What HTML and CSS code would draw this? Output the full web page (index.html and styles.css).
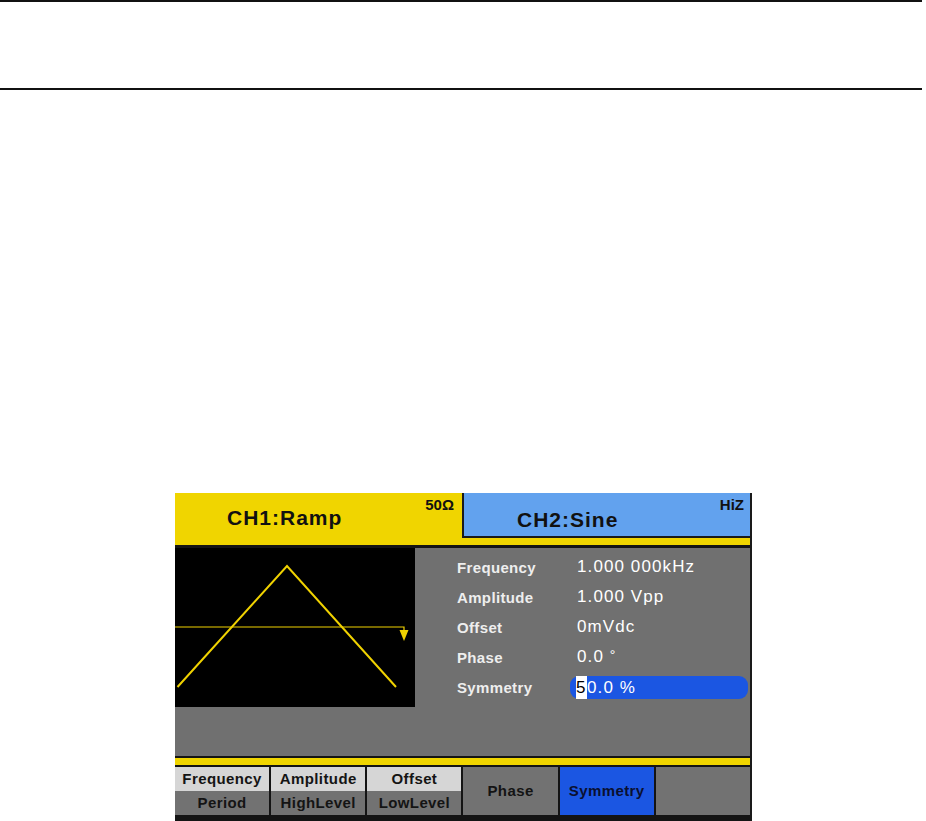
FILE: index.html
```html
<!DOCTYPE html>
<html>
<head>
<meta charset="utf-8">
<link rel="stylesheet" href="styles.css">
</head>
<body>
<div class="rule"></div>
<div class="band"></div>
<div class="rule"></div>
<div class="screen">
  <div class="header">
    <div class="tab tab1">
      <span class="ch">CH1:Ramp</span>
      <span class="load">50Ω</span>
    </div>
    <div class="tab2wrap">
      <div class="tab tab2">
        <span class="ch">CH2:Sine</span>
        <span class="load">HiZ</span>
      </div>
    </div>
  </div>
  <div class="main">
    <div class="graph">
      <svg width="240" height="159" viewBox="0 0 240 159">
        <polyline points="2.5,139 112,18 221,139" fill="none" stroke="#f0d200" stroke-width="2"/>
        <polyline points="0,79 229,79 229,83" fill="none" stroke="#f0d200" stroke-width="1.2"/>
        <polygon points="224.5,82 233.5,82 229,93" fill="#f0d200"/>
      </svg>
    </div>
    <div class="params">
      <div class="row"><span class="lbl">Frequency</span><span class="val">1.000 000kHz</span></div>
      <div class="row"><span class="lbl">Amplitude</span><span class="val">1.000 Vpp</span></div>
      <div class="row"><span class="lbl">Offset</span><span class="val">0mVdc</span></div>
      <div class="row"><span class="lbl">Phase</span><span class="val">0.0 <span class="deg">°</span></span></div>
      <div class="row"><span class="lbl">Symmetry</span><span class="val hl"><span class="cur">5</span>0.0 %</span></div>
    </div>
  </div>
  <div class="footer">
    <div class="ystrip"></div>
    <div class="buttons">
      <div class="btn split"><div class="top">Frequency</div><div class="bot">Period</div></div>
      <div class="btn split"><div class="top">Amplitude</div><div class="bot">HighLevel</div></div>
      <div class="btn split"><div class="top">Offset</div><div class="bot">LowLevel</div></div>
      <div class="btn single">Phase</div>
      <div class="btn single active">Symmetry</div>
      <div class="btn single"></div>
    </div>
  </div>
</div>
</body>
</html>
```
FILE: styles.css
```css
html, body {
  margin: 0;
  padding: 0;
  background: #ffffff;
}
body {
  font-family: "Liberation Sans", Arial, sans-serif;
  overflow: hidden;
}
.rule {
  width: 922px;
  height: 2px;
  background: #111;
}
.band {
  height: 86px;
}
.screen {
  margin-left: 175px;
  margin-top: 403px;
  width: 575px;
  border-right: 2px solid #1a1a1a;
  background: #141414;
}
.header {
  display: flex;
  height: 52px;
  background: #f0d500;
}
.tab {
  position: relative;
  box-sizing: border-box;
}
.tab1 {
  width: 287px;
  height: 52px;
}
.tab2wrap {
  flex: 1;
  height: 52px;
}
.tab2 {
  height: 45px;
  background: #62a2ee;
  border-left: 2px solid #1a1a1a;
  border-bottom: 2px solid #1a1a1a;
}
.ch {
  position: absolute;
  font-weight: bold;
  font-size: 21px;
  letter-spacing: 1px;
  color: #111;
  line-height: 1;
}
.tab1 .ch {
  left: 52px;
  top: 14px;
}
.tab2 .ch {
  left: 53px;
  top: 16px;
}
.load {
  position: absolute;
  top: 4px;
  font-weight: bold;
  font-size: 15px;
  color: #111;
  line-height: 1;
}
.tab1 .load {
  right: 8px;
}
.tab2 .load {
  right: 6px;
}
.main {
  display: flex;
  height: 208px;
  border-top: 3px solid #141414;
  background: #707070;
}
.graph {
  width: 240px;
  height: 159px;
  background: #000;
}
.graph svg {
  display: block;
}
.params {
  padding-top: 4px;
  padding-left: 42px;
}
.row {
  display: flex;
  align-items: center;
  height: 30px;
}
.lbl {
  width: 120px;
  font-weight: bold;
  font-size: 15px;
  letter-spacing: 0.35px;
  color: #eeeeee;
}
.val {
  font-size: 17px;
  letter-spacing: 1.1px;
  color: #ffffff;
}
.deg {
  font-size: 14px;
  vertical-align: 2px;
}
.hl {
  box-sizing: border-box;
  display: inline-block;
  height: 23px;
  line-height: 23px;
  width: 178px;
  margin-left: -7px;
  padding-left: 6px;
  border-radius: 9px;
  background: #1b56e2;
}
.cur {
  display: inline-block;
  width: 11px;
  background: #ffffff;
  color: #000;
}
.footer {
  padding-top: 2px;
  padding-bottom: 12px;
}
.ystrip {
  height: 7px;
  background: #f0d500;
  margin-bottom: 2px;
}
.buttons {
  display: grid;
  grid-template-columns: repeat(6, 1fr);
  gap: 2px;
  height: 48px;
}
.btn {
  font-weight: bold;
  font-size: 15px;
  letter-spacing: 0.4px;
  color: #141414;
  text-align: center;
}
.split .top {
  height: 24px;
  line-height: 24px;
  background: #d6d6d6;
}
.split .bot {
  height: 24px;
  line-height: 24px;
  background: #727272;
}
.single {
  line-height: 48px;
  background: #727272;
}
.single.active {
  background: #1b56e2;
  color: #0a1030;
}
```
